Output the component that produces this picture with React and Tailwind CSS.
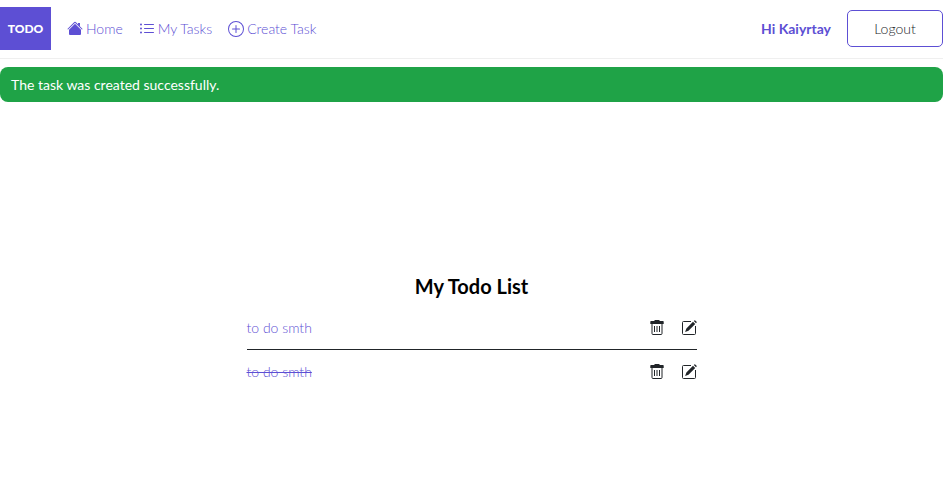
import React from "react";
import { BsListUl, BsPlusCircle } from "react-icons/bs";

function HouseIcon() {
  return (
    <svg width="16" height="16" viewBox="0 0 16 16" fill="currentColor" aria-hidden="true">
      <path d="m8 2.8 6 6V13a1 1 0 0 1-1 1H3a1 1 0 0 1-1-1V8.800zm5-.8v3.500l-2-2V2z" />
      <path d="M7.293 1a1 1 0 0 1 1.414 0l6.647 6.646a.5.5 0 0 1-.708.708L8 1.707 1.354 8.354a.5.5 0 1 1-.708-.708z" />
    </svg>
  );
}

function TrashIcon() {
  return (
    <svg width="16" height="16" viewBox="0 0 16 16" fill="none" stroke="currentColor" aria-hidden="true">
      <path d="M5.5 0h5v1H14a.7.7 0 0 1 .7.7V4H1.3V1.700A.7.7 0 0 1 2 1h3.500z" fill="currentColor" stroke="none" />
      <path d="M3 4v9.500a1 1 0 0 0 1 1h8a1 1 0 0 0 1-1V4M5.500 6v6M8 6v6M10.500 6v6" />
    </svg>
  );
}

function EditIcon() {
  return (
    <svg width="16" height="16" viewBox="0 0 16 16" fill="none" stroke="currentColor" aria-hidden="true">
      <path d="M10 1.500H2.500a1 1 0 0 0-1 1v11a1 1 0 0 0 1 1h11a1 1 0 0 0 1-1V6" />
      <path d="M12 1.700l2.200 2.200L7.500 10.700l-3.400 1.300 1.300-3.400zM12.800 1l.6-.6a.6.6 0 0 1 .8 0l1.400 1.400a.6.6 0 0 1 0 .8l-.6.600z" fill="currentColor" stroke="none" />
    </svg>
  );
}

const navItems = [
  { label: "Home", icon: <HouseIcon /> },
  { label: "My Tasks", icon: <BsListUl size={16} aria-hidden="true" /> },
  { label: "Create Task", icon: <BsPlusCircle size={16} aria-hidden="true" /> },
];

const tasks = [
  { id: 1, title: "to do smth", done: false },
  { id: 2, title: "to do smth", done: true },
];

export default function App() {
  return (
    <div className="flex min-h-screen flex-col bg-white font-['Lato',sans-serif] text-sm font-light text-[#212529]">
      <header className="flex items-center justify-between border-b border-[#efefef] pt-[7px] pb-2 text-[#5d4fd4]">
        <nav className="flex items-center gap-4">
          <a href="#" className="flex h-[43px] w-[51px] items-center justify-center bg-[#5d4fd4] text-xs font-black text-white">
            TODO
          </a>
          {navItems.map((item) => (
            <a key={item.label} href="#" className="flex items-center gap-[3px]">
              {item.icon}
              {item.label}
            </a>
          ))}
        </nav>
        <div className="flex items-center gap-4">
          <span className="font-bold">Hi Kaiyrtay</span>
          <button type="button" className="h-[37px] w-24 rounded-[5px] border border-[#5d4fd4] text-[#212529]">
            Logout
          </button>
        </div>
      </header>
      <div role="status" className="mt-2 flex h-[35px] items-center rounded-[8px] bg-[#1fa347] px-[11px] font-normal text-white">
        The task was created successfully.
      </div>
      <main className="mx-auto mt-[168px] w-[450px]">
        <h1 className="mb-1 text-center text-xl leading-8 font-bold text-black">My Todo List</h1>
        <ul className="divide-y divide-[#212529]">
          {tasks.map((task) => (
            <li key={task.id} className="flex h-[44px] items-center justify-between">
              <a href="#" className={task.done ? "text-[#5d4fd4] line-through" : "text-[#5d4fd4]"}>
                {task.title}
              </a>
              <div className="flex gap-4">
                <button type="button" aria-label="Delete task"><TrashIcon /></button>
                <button type="button" aria-label="Edit task"><EditIcon /></button>
              </div>
            </li>
          ))}
        </ul>
      </main>
    </div>
  );
}
